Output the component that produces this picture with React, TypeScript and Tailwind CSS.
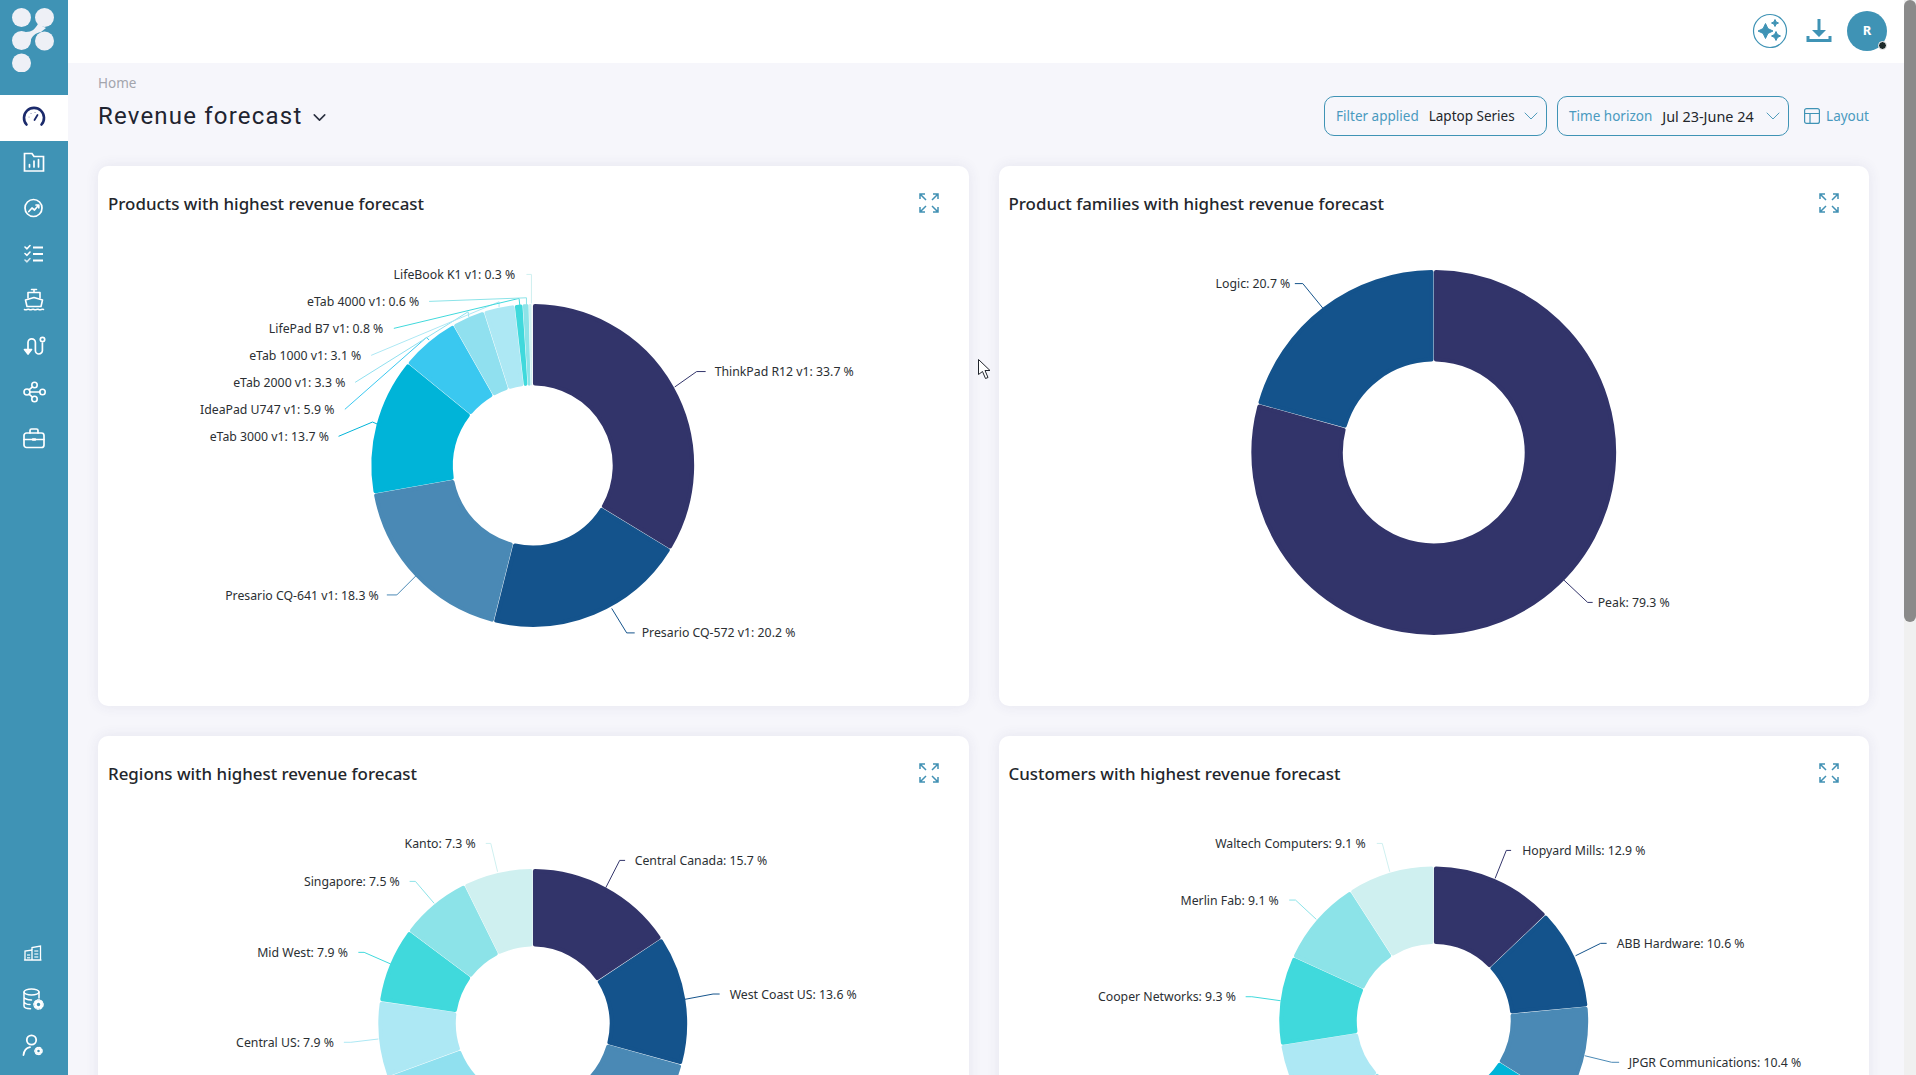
import { ChevronDown } from 'lucide-react';

const navy = '#32346a';
const blue = '#14538c';
const steel = '#4a89b5';
const cyan = '#00b4d8';
const sky = '#3ac8f0';
const aqua = '#90e0ef';
const pale = '#ade8f4';
const teal = '#40d9dc';
const mint = '#8ce3e8';
const ice = '#cff0f0';

interface Label {
  text: string;
  x: number;
  y: number;
  end?: boolean;
  color: string;
  line: string;
}

interface Chart {
  title: string;
  cx: number;
  cy: number;
  R: number;
  r: number;
  slices: [number, string][];
  labels: Label[];
}

// all label and leader coordinates are page pixels, the svg viewBox takes care of the offset
const charts: Chart[] = [
  {
    title: 'Products with highest revenue forecast',
    cx: 533,
    cy: 465.5,
    R: 161.5,
    r: 80,
    slices: [[33.7, navy], [20.2, blue], [18.3, steel], [13.7, cyan], [5.9, sky], [3.3, aqua], [3.1, pale], [0.8, teal], [0.6, mint], [0.3, ice]],
    labels: [
      { text: 'ThinkPad R12 v1: 33.7 %', x: 715, y: 371.5, color: navy, line: '675,387 697,371.5 706,371.5' },
      { text: 'Presario CQ-572 v1: 20.2 %', x: 642, y: 633, color: blue, line: '612,608.5 627,633 635,633' },
      { text: 'Presario CQ-641 v1: 18.3 %', x: 379, y: 595.5, end: true, color: steel, line: '418,574 397,595 387,595' },
      { text: 'eTab 3000 v1: 13.7 %', x: 329, y: 436.5, end: true, color: cyan, line: '338.7,436.3 372.7,422 377.3,424' },
      { text: 'IdeaPad U747 v1: 5.9 %', x: 334.5, y: 409.5, end: true, color: sky, line: '345,409.3 426.7,337.3 429.3,340' },
      { text: 'eTab 2000 v1: 3.3 %', x: 345.5, y: 382.5, end: true, color: aqua, line: '355.3,382.3 468.3,311.7 469,316.7' },
      { text: 'eTab 1000 v1: 3.1 %', x: 361.5, y: 355.5, end: true, color: pale, line: '371.3,355.3 499.3,301.7 499.3,307' },
      { text: 'LifePad B7 v1: 0.8 %', x: 383.5, y: 328.5, end: true, color: teal, line: '394,328.3 519.3,298.3 520,305' },
      { text: 'eTab 4000 v1: 0.6 %', x: 419.5, y: 301.5, end: true, color: mint, line: '429.3,301.3 526.7,297.7 526.7,305' },
      { text: 'LifeBook K1 v1: 0.3 %', x: 515.5, y: 274.5, end: true, color: ice, line: '526.7,274.3 531.7,274.3 531.7,303.3' },
    ],
  },
  {
    title: 'Product families with highest revenue forecast',
    cx: 1434,
    cy: 452.5,
    R: 182.5,
    r: 91,
    slices: [[79.3, navy], [20.7, blue]],
    labels: [
      { text: 'Peak: 79.3 %', x: 1598, y: 602.5, color: navy, line: '1563,579 1588,602.5 1593,602.5' },
      { text: 'Logic: 20.7 %', x: 1290.5, y: 283.5, end: true, color: blue, line: '1323,308 1303,283.5 1295,283.5' },
    ],
  },
  {
    title: 'Regions with highest revenue forecast',
    cx: 533,
    cy: 1023.5,
    R: 154.5,
    r: 77,
    slices: [[15.7, navy], [13.6, blue], [13, steel], [10, cyan], [9, sky], [8.1, aqua], [7.9, pale], [7.9, teal], [7.5, mint], [7.3, ice]],
    labels: [
      { text: 'Central Canada: 15.7 %', x: 635, y: 860.5, color: navy, line: '606,887.7 620,860.3 625.4,860.3' },
      { text: 'West Coast US: 13.6 %', x: 730, y: 994.5, color: blue, line: '685.3,999.3 713.4,994 720,994' },
      { text: 'Central US: 7.9 %', x: 334, y: 1042.5, end: true, color: pale, line: '344,1042.3 351,1042.3 378.6,1039' },
      { text: 'Mid West: 7.9 %', x: 348, y: 952.5, end: true, color: teal, line: '358.5,952.3 364.3,952.3 391,964' },
      { text: 'Singapore: 7.5 %', x: 400, y: 881.5, end: true, color: mint, line: '409.8,881.3 415.6,881.3 434.4,903.3' },
      { text: 'Kanto: 7.3 %', x: 476, y: 843.5, end: true, color: ice, line: '486,843.3 491,843.3 497.8,871.7' },
    ],
  },
  {
    title: 'Customers with highest revenue forecast',
    cx: 1434,
    cy: 1021,
    R: 154.5,
    r: 77,
    slices: [[12.9, navy], [10.6, blue], [10.4, steel], [9.9, cyan], [9.9, sky], [9.5, aqua], [9.3, pale], [9.3, teal], [9.1, mint], [9.1, ice]],
    labels: [
      { text: 'Hopyard Mills: 12.9 %', x: 1522.5, y: 850.5, color: navy, line: '1495.4,878.3 1506.6,850.3 1511.4,850.3' },
      { text: 'ABB Hardware: 10.6 %', x: 1617, y: 943.5, color: blue, line: '1575.9,955.7 1601,943.3 1607,943.3' },
      { text: 'JPGR Communications: 10.4 %', x: 1629, y: 1062.5, color: steel, line: '1585,1055.7 1612,1062.3 1619.5,1062.3' },
      { text: 'Cooper Networks: 9.3 %', x: 1236, y: 996.5, end: true, color: teal, line: '1245.8,996.7 1252,996.7 1280.7,1000.7' },
      { text: 'Merlin Fab: 9.1 %', x: 1279, y: 900.5, end: true, color: mint, line: '1289.4,900 1295.7,900 1316.5,919.3' },
      { text: 'Waltech Computers: 9.1 %', x: 1366, y: 843.5, end: true, color: ice, line: '1377,843.3 1382.5,843.3 1390,871.7' },
    ],
  },
];

function slicePath(cx: number, cy: number, R: number, r: number, a0: number, a1: number, c: number) {
  const pt = (rad: number, a: number) => `${(cx + rad * Math.sin(a)).toFixed(2)} ${(cy - rad * Math.cos(a)).toFixed(2)}`;
  const inset = c + 0.2;
  const oR = R - c;
  const iR = r + c;
  const oPad = inset / oR;
  const iPad = inset / iR;
  const large = a1 - a0 > Math.PI ? 1 : 0;
  return `M${pt(oR, a0 + oPad)}A${oR} ${oR} 0 ${large} 1 ${pt(oR, a1 - oPad)}L${pt(iR, a1 - iPad)}A${iR} ${iR} 0 ${large} 0 ${pt(iR, a0 + iPad)}Z`;
}

function Donut({ chart, top }: { chart: Chart; top: number }) {
  let acc = 0;
  const left = chart.cx < 1000 ? 98 : 999;
  return (
    <svg viewBox={`${left} ${top} 871 480`} className="block w-full h-[480px]">
      {chart.labels.map((l) => (
        <polyline key={l.text} points={l.line} fill="none" stroke={l.color} strokeWidth="1" />
      ))}
      {chart.slices.map(([pct, color]) => {
        const a0 = (acc / 100) * Math.PI * 2;
        acc += pct;
        const a1 = (acc / 100) * Math.PI * 2;
        const c = Math.max(0.1, Math.min(2, ((a1 - a0) * chart.r) / 2 - 0.3));
        return (
          <path
            key={color}
            d={slicePath(chart.cx, chart.cy, chart.R, chart.r, a0, a1, c)}
            fill={color}
            stroke={color}
            strokeWidth={c * 2}
            strokeLinejoin="round"
          />
        );
      })}
      {chart.labels.map((l) => (
        <text key={l.text} x={l.x} y={l.y} textAnchor={l.end ? 'end' : 'start'} dominantBaseline="central" fontSize="12.3" fill="#2b2f33">
          {l.text}
        </text>
      ))}
    </svg>
  );
}

function ExpandIcon() {
  return (
    <svg width="20" height="20" viewBox="0 0 20 20" fill="none" stroke="#4291b4" strokeWidth="1.5" className="mb-[2px]">
      <path d="M1 6V1h5M1 1l6 6M14 1h5v5M19 1l-6 6M1 14v5h5M1 19l6-6M14 19h5v-5M19 19l-6-6" />
    </svg>
  );
}

const sideIcon = { width: 24, height: 24, viewBox: '0 0 24 24', fill: 'none', stroke: 'white', strokeWidth: 1.7, strokeLinecap: 'round' as const, strokeLinejoin: 'round' as const };

const topIcons = [
  <svg {...sideIcon} stroke="#1b2a6b" strokeWidth={2.6}>
    <path d="M4.500 19.500a10 10 0 1 1 15 0" />
    <path d="M12.500 15l3-5" strokeWidth={1.8} />
    <path d="M7 12h.1M9 8.500h.1M13 7.500h.1" strokeWidth={1.2} stroke="#8a93b8" />
  </svg>,
  <svg {...sideIcon}>
    <path d="M2.500 21V3.500h7.500l2 3h9.500V21z" strokeLinecap="square" strokeLinejoin="miter" />
    <path d="M7.500 17v-2.500M12 17v-6M16.500 17V9.500" />
  </svg>,
  <svg {...sideIcon}>
    <circle cx="11.500" cy="12" r="8.500" />
    <path d="M6.800 15.500l3.200-3.500 2.500 2 4-4.800M14 9h2.800v2.800" />
  </svg>,
  <svg {...sideIcon} strokeWidth={1.6}>
    <path d="M11 5.500h10M11 12h10M11 18.500h10" strokeWidth={2} strokeLinecap="butt" />
    <path d="M3 5l2 1.800 3-3.300M3 11.500l2 1.800 3-3.300" />
    <path d="M3 18l2 1.800 3-3.300" stroke="#d5e8f0" />
  </svg>,
  <svg {...sideIcon} strokeWidth={1.6}>
    <path d="M9.500 1.500h5M6 10V4.500h12V10M12 1.500v3" />
    <path d="M3.500 12L12 9.500l8.500 2.500-1.500 6.500H5z" />
    <path d="M2.500 21.500c2 1 3-.8 4.800 0 2 1 3-.8 4.700 0 2 1 3-.8 4.800 0 2 .8 3-.8 4.700 0" />
  </svg>,
  <svg {...sideIcon}>
    <path d="M6 18V8.500a3.700 3.700 0 0 1 7.400 0v8a3.500 3.500 0 0 0 7 0V9" />
    <path d="M2.500 15.500L6 20l3.500-4.500z" fill="white" />
    <circle cx="20.500" cy="5.500" r="2.200" />
  </svg>,
  <svg {...sideIcon} strokeWidth={1.6}>
    <circle cx="5" cy="12" r="3" />
    <circle cx="12.500" cy="5" r="2.700" />
    <circle cx="12.500" cy="19" r="2.700" />
    <circle cx="20.500" cy="12" r="2.700" />
    <path d="M8 12h9.800M7 9.800L10.500 6.800M7 14.200l3.500 3" />
  </svg>,
  <svg {...sideIcon}>
    <rect x="2" y="7" width="20" height="14.500" rx="2.500" />
    <path d="M8 7V4.500a1.500 1.500 0 0 1 1.500-1.500h5A1.500 1.500 0 0 1 16 4.500V7M2 13.500h20" />
    <path d="M11 13.500h2" strokeWidth={2.6} />
  </svg>,
];

function Gear({ x, y, size }: { x: number; y: number; size: number }) {
  return (
    <g stroke="none">
      <circle cx={x} cy={y} r={size} fill="white" />
      <circle cx={x} cy={y} r={size + 0.5} fill="none" stroke="white" strokeWidth="1.600" strokeDasharray="1.800 1.500" />
      <circle cx={x} cy={y} r={size * 0.42} fill="#3f93b5" />
    </g>
  );
}

const bottomIcons = [
  <svg {...sideIcon} strokeWidth={1.3} strokeLinejoin="miter">
    <path d="M4 19v-9l7-1v10zM11 19V6.500l8.500-1.500v14zM3.500 19h16.500" />
    <path d="M6 14h3.200M6 16.800h3.200M13.300 10h4M13.300 13h4M13.300 16h4" stroke="#cfe6ef" strokeWidth={1.6} strokeLinecap="butt" />
  </svg>,
  <svg {...sideIcon} strokeWidth={1.5}>
    <ellipse cx="10.500" cy="5" rx="7.500" ry="3" />
    <path d="M3 5v14c0 1.500 2.500 2.600 6.500 2.800M18 5v6M3 10c0 1.500 3 3 7.500 3M3 14.500c0 1.500 2.500 3 6 3" />
    <Gear x={17.500} y={17.500} size={4} />
  </svg>,
  <svg {...sideIcon} strokeWidth={1.8}>
    <circle cx="10.500" cy="7" r="4.700" />
    <path d="M2.500 22c.5-4 3-7 6.500-7.800" />
    <Gear x={17.500} y={18} size={3} />
  </svg>,
];

function Filter({ label, value, width, valueSize }: { label: string; value: string; width: string; valueSize: string }) {
  return (
    <div className={`flex items-center h-[40px] pl-[11px] border border-[#3f93b5] rounded-[10px] whitespace-nowrap ${width}`}>
      <span className="pt-[2px] mr-[10px] text-[13.5px] text-[#4a9abf]">{label}</span>
      <span className={`pt-[2px] text-[#23262b] ${valueSize}`}>{value}</span>
      <ChevronDown size={24} strokeWidth={0.9} className="ml-auto mr-[3px] text-[#3f93b5]" />
    </div>
  );
}

export default function App() {
  return (
    <div className="relative flex h-screen overflow-hidden bg-[#f6f6fb] font-['Noto_Sans',sans-serif]">
      {/* Sidebar */}
      <aside className="flex flex-col w-[68px] shrink-0 bg-[#3f93b5] pb-[6px]">
        <div className="h-[95px] pl-[12px] pt-[8px]">
          <svg width="44" height="64" viewBox="0 0 44 64" fill="#eef0f6">
            <circle cx="9.500" cy="9.500" r="9.500" />
            <circle cx="32.500" cy="9.500" r="9.500" />
            <circle cx="9.500" cy="32.500" r="9.500" />
            <circle cx="32.500" cy="33" r="9.500" />
            <circle cx="9.500" cy="55" r="9.500" />
            <path d="M26 16c-3 5-6 8-12 8l-4 2 8 8c2-6 5-9 11-10l5-4z" />
          </svg>
        </div>
        {topIcons.map((icon, i) => (
          <div key={i} className={`flex items-center justify-center h-[46px] pr-[1px] ${i === 0 ? 'bg-white pb-[2px]' : 'pb-[4px]'}`}>
            {icon}
          </div>
        ))}
        <div className="mt-auto">
          {bottomIcons.map((icon, i) => (
            <div key={i} className="flex items-center justify-center h-[46px] pr-[3px] pb-[2px]">
              {icon}
            </div>
          ))}
        </div>
      </aside>

      {/* Main */}
      <main className="flex-1 min-w-0 h-full overflow-hidden">
        <header className="flex items-center justify-end h-[63px] bg-white pr-[17px] pb-[2px]">
          <svg width="36" height="36" viewBox="0 0 36 36" fill="none" stroke="#3f93b5" className="mr-[18px]">
            <circle cx="18" cy="18" r="16.500" strokeWidth="1.200" />
            <path d="M13.500 10.500l2.400 5.100 5.100 2.400-5.100 2.400-2.400 5.100-2.400-5.100L6 18l5.100-2.400z" fill="#3f93b5" />
            <path d="M23 6.500l1.100 2.400 2.400 1.100-2.400 1.100-1.100 2.400-1.100-2.400-2.400-1.100 2.400-1.100zM24 18.500l1.500 3 3 1.500-3 1.500-1.500 3-1.500-3-3-1.500 3-1.500z" fill="#3f93b5" />
          </svg>
          <svg width="26" height="26" viewBox="0 0 26 26" fill="#3f93b5" className="mr-[15px]">
            <path d="M11.500 1h3v11h5.500L13 19 6 12h5.500z" />
            <path d="M0.500 18h3v3h19v-3h3v6h-25z" />
          </svg>
          <div className="relative flex items-center justify-center w-[40px] h-[40px] rounded-full bg-[#3f93b5] text-white text-[13px] font-bold">
            R
            <span className="absolute right-[0px] bottom-[1px] w-[9px] h-[9px] rounded-full bg-[#1d2a2a] border border-white" />
          </div>
        </header>

        <div className="pl-[30px] pr-[35px]">
          <div className="flex justify-between items-start h-[103px] pt-[11px]">
            <div>
              <div className="text-[13.5px] leading-[18px] text-[#a3a5ad]">Home</div>
              <div className="flex items-center gap-[7px] mt-[8px]">
                <h1 className="font-['Roboto',sans-serif] text-[24px] leading-[32px] tracking-[1.2px] text-[#1f2430]">Revenue forecast</h1>
                <ChevronDown size={21} strokeWidth={1.8} className="mt-[3px] text-[#2b3040]" />
              </div>
            </div>
            <div className="flex items-center mt-[21px] h-[41px]">
              <Filter label="Filter applied" value="Laptop Series" width="w-[223px]" valueSize="text-[13.5px]" />
              <div className="w-[10px]" />
              <Filter label="Time horizon" value="Jul 23-June 24" width="w-[232px]" valueSize="text-[14.4px]" />
              <svg width="16" height="16" viewBox="0 0 16 16" fill="none" stroke="#3f93b5" strokeWidth="1.200" className="ml-[15px] mr-[6px]">
                <rect x="0.600" y="0.600" width="14.800" height="14.800" rx="2" />
                <path d="M0.600 5.500h14.800M6 5.500v9.900" />
              </svg>
              <span className="pt-[2px] text-[13.5px] text-[#4a9abf]">Layout</span>
            </div>
          </div>

          <div className="grid grid-cols-2 gap-[30px]">
            {charts.map((chart, i) => (
              <section key={chart.title} className="h-[540px] rounded-[10px] bg-white shadow-[0_0_14px_rgba(60,60,110,0.09)]">
                <div className="flex items-center justify-between h-[60px] pt-[15px] pl-[10px] pr-[30px]">
                  <h2 className="text-[16.9px] font-medium text-[#23262b]">{chart.title}</h2>
                  <ExpandIcon />
                </div>
                <Donut chart={chart} top={i < 2 ? 226 : 796} />
              </section>
            ))}
          </div>
        </div>
      </main>

      {/* Page scrollbar */}
      <div className="w-[12px] shrink-0 bg-[#f0f0f0]">
        <div className="h-[622px] rounded-[6px] bg-[#8a8a8a]" />
      </div>

      {/* Mouse pointer */}
      <svg width="14" height="22" viewBox="0 0 14 22" className="absolute left-[978px] top-[359px]" fill="white" stroke="#20242c" strokeWidth="1">
        <path d="M0.500 0.500v15l4-3 3 7 2.500-1-3-7h5z" />
      </svg>
    </div>
  );
}
